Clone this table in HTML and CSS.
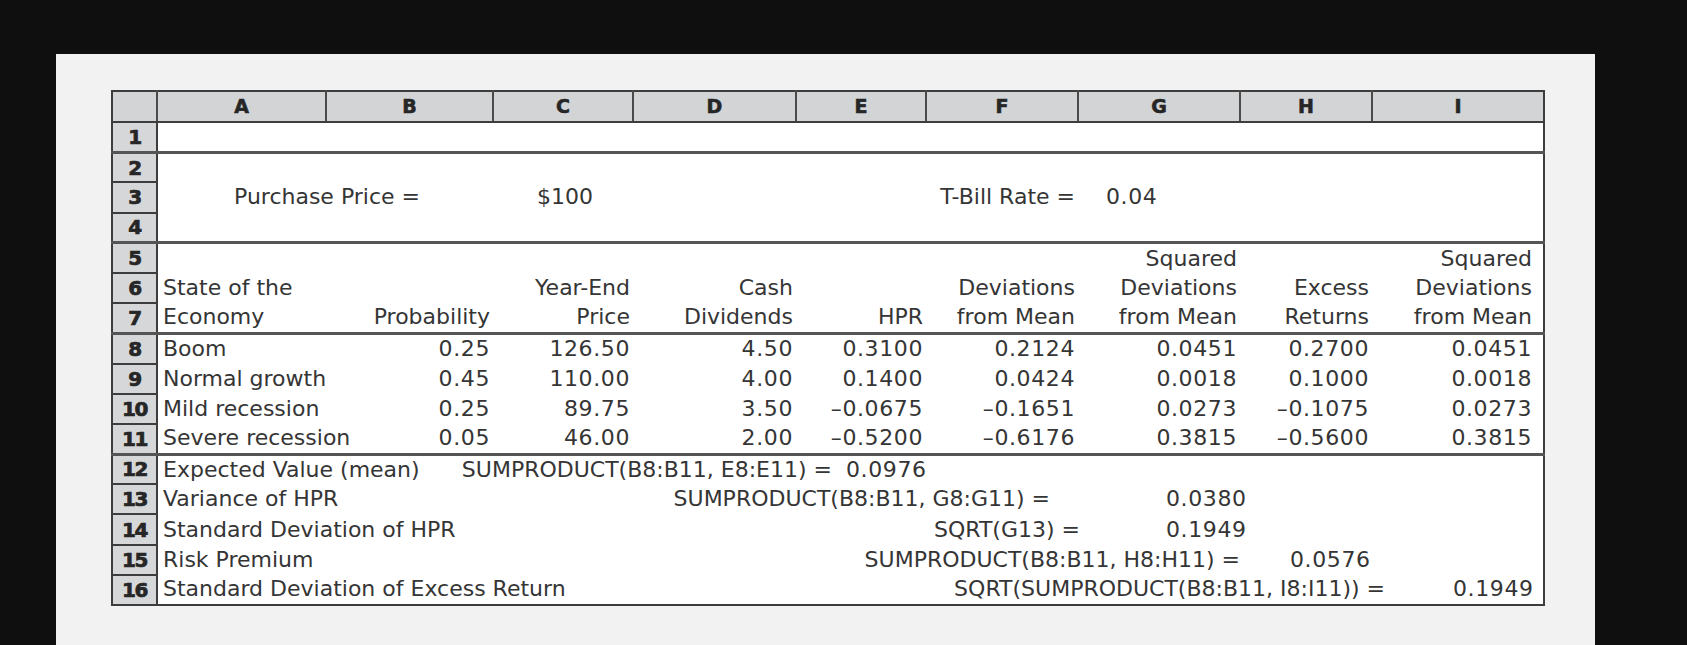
FILE: index.html
```html
<!DOCTYPE html>
<html lang="en">
<head>
<meta charset="utf-8">
<title>HPR Spreadsheet</title>
<link rel="stylesheet" href="styles.css">
</head>
<body>
<div class="panel">
<table class="sheet">
<colgroup>
<col class="w-rn"><col class="w-a"><col class="w-b"><col class="w-c"><col class="w-d"><col class="w-e"><col class="w-f"><col class="w-g"><col class="w-h"><col class="w-i">
</colgroup>
<thead>
<tr class="hdr"><th class="corner"></th><th>A</th><th>B</th><th>C</th><th>D</th><th>E</th><th>F</th><th>G</th><th>H</th><th>I</th></tr>
</thead>
<tbody>
<tr class="sep"><td class="rn">1</td><td colspan="9"></td></tr>
<tr><td class="rn">2</td><td colspan="9"></td></tr>
<tr><td class="rn">3</td><td colspan="2" class="pp">Purchase Price =</td><td class="price">$100</td><td></td><td></td><td class="r">T-Bill Rate =</td><td class="tb">0.04</td><td></td><td></td></tr>
<tr class="sep"><td class="rn">4</td><td colspan="9"></td></tr>
<tr><td class="rn">5</td><td></td><td></td><td></td><td></td><td></td><td></td><td class="r">Squared</td><td></td><td class="r last">Squared</td></tr>
<tr><td class="rn">6</td><td class="l">State of the</td><td></td><td class="r">Year-End</td><td class="r">Cash</td><td></td><td class="r">Deviations</td><td class="r">Deviations</td><td class="r">Excess</td><td class="r last">Deviations</td></tr>
<tr class="sep"><td class="rn">7</td><td class="l">Economy</td><td class="r">Probability</td><td class="r">Price</td><td class="r">Dividends</td><td class="r">HPR</td><td class="r">from Mean</td><td class="r">from Mean</td><td class="r">Returns</td><td class="r last">from Mean</td></tr>
<tr><td class="rn">8</td><td class="l">Boom</td><td class="n">0.25</td><td class="n">126.50</td><td class="n">4.50</td><td class="n">0.3100</td><td class="n">0.2124</td><td class="n">0.0451</td><td class="n">0.2700</td><td class="n last">0.0451</td></tr>
<tr><td class="rn">9</td><td class="l">Normal growth</td><td class="n">0.45</td><td class="n">110.00</td><td class="n">4.00</td><td class="n">0.1400</td><td class="n">0.0424</td><td class="n">0.0018</td><td class="n">0.1000</td><td class="n last">0.0018</td></tr>
<tr><td class="rn">10</td><td class="l">Mild recession</td><td class="n">0.25</td><td class="n">89.75</td><td class="n">3.50</td><td class="n">–0.0675</td><td class="n">–0.1651</td><td class="n">0.0273</td><td class="n">–0.1075</td><td class="n last">0.0273</td></tr>
<tr class="sep"><td class="rn">11</td><td class="l">Severe recession</td><td class="n">0.05</td><td class="n">46.00</td><td class="n">2.00</td><td class="n">–0.5200</td><td class="n">–0.6176</td><td class="n">0.3815</td><td class="n">–0.5600</td><td class="n last">0.3815</td></tr>
<tr><td class="rn">12</td><td colspan="9"><div class="calc c12"><span class="lbl">Expected Value (mean)</span><span class="fx">SUMPRODUCT(B8:B11, E8:E11) =</span><span class="val">0.0976</span></div></td></tr>
<tr><td class="rn">13</td><td colspan="9"><div class="calc c13"><span class="lbl">Variance of HPR</span><span class="fx">SUMPRODUCT(B8:B11, G8:G11) =</span><span class="val">0.0380</span></div></td></tr>
<tr><td class="rn">14</td><td colspan="9"><div class="calc c14"><span class="lbl">Standard Deviation of HPR</span><span class="fx">SQRT(G13) =</span><span class="val">0.1949</span></div></td></tr>
<tr><td class="rn">15</td><td colspan="9"><div class="calc c15"><span class="lbl">Risk Premium</span><span class="fx">SUMPRODUCT(B8:B11, H8:H11) =</span><span class="val">0.0576</span></div></td></tr>
<tr><td class="rn">16</td><td colspan="9"><div class="calc c16"><span class="lbl">Standard Deviation of Excess Return</span><span class="fx">SQRT(SUMPRODUCT(B8:B11, I8:I11)) =</span><span class="val">0.1949</span></div></td></tr>
</tbody>
</table>
</div>
</body>
</html>
```

FILE: styles.css
```css
html, body {
  margin: 0;
  padding: 0;
  background: #0f0f0f;
  height: 645px;
  overflow: hidden;
}

.panel {
  margin: 54px 0 0 56px;
  width: 1539px;
  height: 591px;
  background: #f2f2f2;
  padding: 36px 0 0 55px;
  box-sizing: border-box;
}

.sheet {
  width: 1432px;
  table-layout: fixed;
  border-collapse: collapse;
  border: 2px solid #3d3d3d;
  background: #ffffff;
  font-family: "DejaVu Sans", "Liberation Sans", sans-serif;
  font-size: 22px;
  color: #353535;
}

.w-rn { width: 45px; }
.w-a { width: 169px; }
.w-b { width: 167px; }
.w-c { width: 140px; }
.w-d { width: 163px; }
.w-e { width: 130px; }
.w-f { width: 152px; }
.w-g { width: 162px; }
.w-h { width: 132px; }
.w-i { width: 172px; }

.sheet tr { height: 30.2px; }
.sheet .hdr { height: 31px; }

.sheet td, .sheet th {
  padding: 0;
  line-height: 1;
  white-space: nowrap;
  vertical-align: middle;
}

.hdr th {
  background: #d3d4d6;
  border-right: 2px solid #4a4a4a;
  border-bottom: 2px solid #3d3d3d;
  font-size: 19px;
  font-weight: 700;
  color: #262626;
  text-align: center;
  -webkit-text-stroke: 0.6px #262626;
}
.hdr th:last-child { border-right: 0; }

.rn {
  background: #d6d7d9;
  border-right: 2px solid #3d3d3d;
  border-bottom: 2px solid #3d3d3d;
  font-size: 20px;
  font-weight: 700;
  color: #262626;
  text-align: center;
  letter-spacing: -1.5px;
  -webkit-text-stroke: 0.7px #262626;
}

.sep td { border-bottom: 3px solid #555555; }

.l { padding-left: 5px !important; text-align: left; }
.r, .n { text-align: right; padding-right: 3px !important; }
.n { letter-spacing: 0.6px; }
.last { padding-right: 11px !important; }

.pp { padding-left: 76px !important; }
.price { padding-left: 44px !important; }
.tb { padding-left: 28px !important; letter-spacing: 0.6px; }

.calc {
  display: flex;
  align-items: center;
  padding-left: 5px;
}
.calc .lbl { flex: 0 0 auto; }
.calc .fx { margin-left: auto; flex: 0 0 auto; }
.calc .val { width: 80px; text-align: right; letter-spacing: 0.6px; flex: 0 0 auto; }

.c12 { padding-right: 617px; }
.c12 .fx { margin-right: 14px; }
.c13 { padding-right: 297px; }
.c13 .fx { margin-right: 116px; }
.c14 { padding-right: 297px; }
.c14 .fx { margin-right: 86px; }
.c15 { padding-right: 173px; }
.c15 .fx { margin-right: 50px; }
.c16 { padding-right: 10px; }
.c16 .fx { margin-right: 68px; }
```
